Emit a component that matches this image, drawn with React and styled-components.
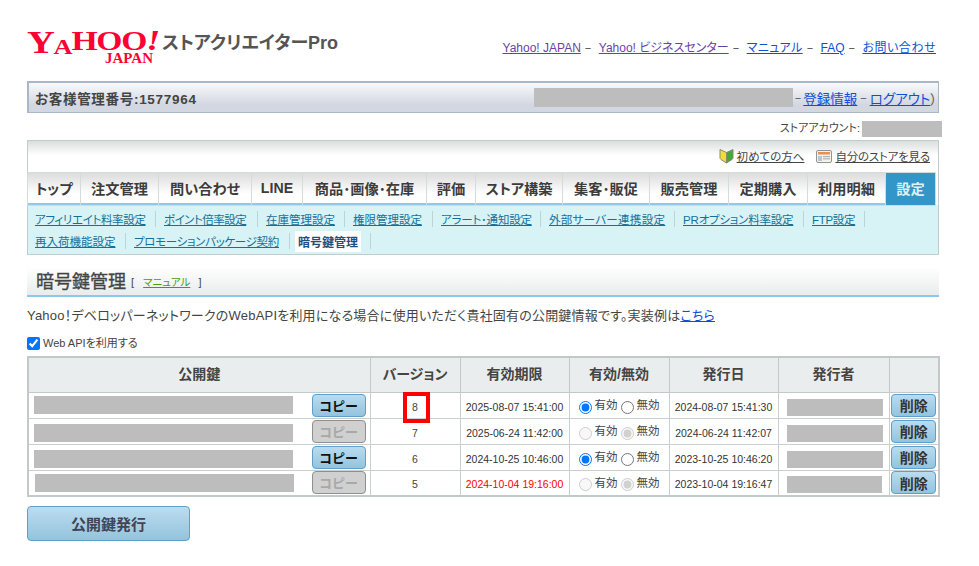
import React from "react";
import styled, { createGlobalStyle } from "styled-components";

const GlobalStyle = createGlobalStyle`
  html, body {
    margin: 0;
    padding: 0;
    background: #fff;
    color: #333;
    font-family: "Liberation Sans", "Noto Sans CJK JP", sans-serif;
    font-feature-settings: "palt";
  }
  a { cursor: pointer; }
`;

const topLinks = [
  { label: "Yahoo! JAPAN", visited: true },
  { label: "Yahoo! ビジネスセンター", visited: true },
  { label: "マニュアル", track: 0.4 },
  { label: "FAQ" },
  { label: "お問い合わせ", track: 0.5 },
];

const tabs = [
  ["トップ", 52],
  ["注文管理", 77],
  ["問い合わせ", 92],
  ["LINE", 50],
  ["商品･画像･在庫", 123],
  ["評価", 48],
  ["ストア構築", 86],
  ["集客･販促", 86],
  ["販売管理", 78],
  ["定期購入", 78],
  ["利用明細", 77],
  ["設定", 49],
];

const subLinks = [
  ["アフィリエイト料率設定", 121, -0.35],
  ["ポイント倍率設定", 94, -0.5],
  ["在庫管理設定", 79, 0],
  ["権限管理設定", 80, 0],
  ["アラート･通知設定", 100, -0.2],
  ["外部サーバー連携設定", 126, 0.3],
  ["PRオプション料率設定", 121, -0.2],
  ["FTP設定", 53, -0.3],
];

const subLinksSecond = [
  ["再入荷機能設定", 91, 0],
  ["プロモーションパッケージ契約", 156, -0.3],
];

const rows = [
  { version: 8, expires: "2025-08-07 15:41:00", issued: "2024-08-07 15:41:30", active: true, marked: true },
  { version: 7, expires: "2025-06-24 11:42:00", issued: "2024-06-24 11:42:07", active: false, keyDrop: 4 },
  { version: 6, expires: "2024-10-25 10:46:00", issued: "2023-10-25 10:46:20", active: true, keyDrop: 4 },
  { version: 5, expires: "2024-10-04 19:16:00", issued: "2023-10-04 19:16:47", active: false, late: true, shifted: true },
];

const BeginnerIcon = () => (
  <svg width="15" height="16" viewBox="0 0 15 16">
    <path d="M1 1.5 7.5 4.5V15L2 11.5C1.2 11 1 10.4 1 9.5Z" fill="#f2dc3c" stroke="#8a8a70" strokeWidth="1" />
    <path d="M14 1.5 7.5 4.5V15L13 11.5C13.8 11 14 10.4 14 9.5Z" fill="#45a83a" stroke="#8a8a70" strokeWidth="1" />
  </svg>
);

const StoreIcon = () => (
  <svg width="16" height="13" viewBox="0 0 16 13">
    <rect x="0.5" y="0.5" width="15" height="12" rx="1.5" fill="#f6f2e8" stroke="#8d959c" />
    <rect x="2" y="2" width="12" height="2.5" fill="#e58f5a" />
    <rect x="2" y="6" width="4" height="5" fill="#b9c6d2" />
    <rect x="7" y="6" width="7" height="1.2" fill="#a9b4bd" />
    <rect x="7" y="8.2" width="7" height="1.2" fill="#a9b4bd" />
  </svg>
);

const App = () => (
  <Page>
    <GlobalStyle />
    <Header>
      <Brand>
        <Logo>
          <LogoWord>
            <LogoLetter $size={32} $drop={1}>Y</LogoLetter>
            <LogoLetter $size={22} $drop={6}>A</LogoLetter>
            <LogoLetter $size={28}>H</LogoLetter>
            <LogoLetter $size={28}>O</LogoLetter>
            <LogoLetter $size={28}>O</LogoLetter>
            <LogoBang>!</LogoBang>
          </LogoWord>
          <LogoJapan>JAPAN</LogoJapan>
        </Logo>
        <BrandName>ストアクリエイターPro</BrandName>
      </Brand>
      <TopLinks>
        {topLinks.map((link, i) => (
          <React.Fragment key={link.label}>
            <TopLink $visited={link.visited} $track={link.track}>
              {link.label}
            </TopLink>
            {i < topLinks.length - 1 && <TopDash>−</TopDash>}
          </React.Fragment>
        ))}
      </TopLinks>
    </Header>

    <AccountBar>
      <AccountNo>お客様管理番号:1577964</AccountNo>
      <AccountRight>
        <Redacted $w={259} $h={19} />
        <Dash $gap={2}>−</Dash>
        <BarLink>登録情報</BarLink>
        <Dash $gap={3}>−</Dash>
        <BarLink>ログアウト</BarLink>
        <span>）</span>
      </AccountRight>
    </AccountBar>

    <StoreAccount>
      <StoreAccountLabel>ストアアカウント:</StoreAccountLabel>
      <Redacted $w={80} $h={16} />
    </StoreAccount>

    <NavPanel>
      <HelpBar>
        <HelpLink>
          <BeginnerIcon />
          <span>初めての方へ</span>
        </HelpLink>
        <HelpLink $track={-0.2}>
          <StoreIcon />
          <span>自分のストアを見る</span>
        </HelpLink>
      </HelpBar>
      <Tabs>
        {tabs.map(([label, width]) => (
          <Tab key={label} $w={width} $active={label === "設定"}>
            {label}
          </Tab>
        ))}
      </Tabs>
      <SubNav>
        <SubRow>
          {subLinks.map(([label, width, track]) => (
            <SubItem key={label} $w={width}>
              <SubLink $track={track}>{label}</SubLink>
            </SubItem>
          ))}
        </SubRow>
        <SubRow>
          {subLinksSecond.map(([label, width, track]) => (
            <SubItem key={label} $w={width}>
              <SubLink $track={track}>{label}</SubLink>
            </SubItem>
          ))}
          <SubItem $w={73}>
            <SubActive>暗号鍵管理</SubActive>
          </SubItem>
        </SubRow>
      </SubNav>
    </NavPanel>

    <Heading>
      <HeadingTitle>暗号鍵管理</HeadingTitle>
      <HeadingNote>
        [ <ManualLink>マニュアル</ManualLink> ]
      </HeadingNote>
    </Heading>

    <Description>
      Yahoo！デベロッパーネットワークのWebAPIを利用になる場合に使用いただく貴社固有の公開鍵情報です。実装例は
      <BarLink>こちら</BarLink>
    </Description>

    <CheckLine>
      <input type="checkbox" defaultChecked />
      <span>Web APIを利用する</span>
    </CheckLine>

    <KeyTable>
      <colgroup>
        <col style={{ width: 342 }} />
        <col style={{ width: 90 }} />
        <col style={{ width: 109 }} />
        <col style={{ width: 100 }} />
        <col style={{ width: 109 }} />
        <col style={{ width: 111 }} />
        <col style={{ width: 50 }} />
      </colgroup>
      <thead>
        <HeadRow>
          <Th>公開鍵</Th>
          <Th>バージョン</Th>
          <Th>有効期限</Th>
          <Th>有効/無効</Th>
          <Th>発行日</Th>
          <Th>発行者</Th>
          <Th />
        </HeadRow>
      </thead>
      <tbody>
        {rows.map((row) => (
          <Row key={row.version}>
            <Td>
              <KeyCell>
                <Redacted $w={259} $h={18} $shift={row.shifted ? 1 : 0} $drop={row.keyDrop} />
                <CopyButton disabled={!row.active}>コピー</CopyButton>
              </KeyCell>
            </Td>
            <VersionCell>
              {row.version}
              {row.marked && <Marker />}
            </VersionCell>
            <DateCell $late={row.late}>{row.expires}</DateCell>
            <Td>
              <RadioGroup>
                <RadioLabel>
                  <input type="radio" name={`v${row.version}`} defaultChecked={row.active} disabled={!row.active} />
                  <span>有効</span>
                </RadioLabel>
                <RadioLabel>
                  <input type="radio" name={`v${row.version}`} defaultChecked={!row.active} disabled={!row.active} />
                  <span>無効</span>
                </RadioLabel>
              </RadioGroup>
            </Td>
            <DateCell>{row.issued}</DateCell>
            <Td>
              <IssuerCell>
                <Redacted $w={row.shifted ? 95 : 96} $h={17} />
              </IssuerCell>
            </Td>
            <Td>
              <DeleteCell>
                <DeleteButton>削除</DeleteButton>
              </DeleteCell>
            </Td>
          </Row>
        ))}
      </tbody>
    </KeyTable>

    <IssueButton>公開鍵発行</IssueButton>
  </Page>
);

export default App;

const Page = styled.div`
  width: 912px;
  height: 566px;
  margin-left: 27px;
  box-sizing: border-box;
  padding-top: 30px;
`;

const Header = styled.header`
  display: flex;
  justify-content: space-between;
  height: 51px;
`;

const Brand = styled.div`
  display: flex;
  align-items: flex-start;
  gap: 5px;
`;

const Logo = styled.div`
  width: 130px;
  display: flex;
  flex-direction: column;
  color: #ff0033;
  font-family: "Liberation Serif", serif;
  font-weight: 700;
`;

const LogoWord = styled.div`
  display: flex;
  align-items: flex-start;
  height: 22px;
  line-height: 22px;
  white-space: nowrap;
  letter-spacing: -1px;
  transform: scaleX(1.2);
  transform-origin: left top;
`;

const LogoLetter = styled.span`
  font-size: ${(p) => p.$size}px;
  margin-top: ${(p) => p.$drop || 0}px;
`;

const LogoBang = styled.span`
  font-size: 30px;
  font-style: italic;
  margin-top: -1px;
`;

const LogoJapan = styled.div`
  align-self: flex-end;
  margin-right: 4px;
  font-size: 15px;
  line-height: 12px;
`;

const BrandName = styled.div`
  margin-top: 1px;
  font-size: 18px;
  line-height: 24px;
  font-weight: 700;
  color: #555;
`;

const TopLinks = styled.nav`
  display: flex;
  align-items: baseline;
  margin-top: 10px;
  margin-right: 3px;
  font-size: 12px;
  line-height: 16px;
`;

const TopLink = styled.a`
  color: ${(p) => (p.$visited ? "#6b3fa8" : "#0f4fd8")};
  text-decoration: underline;
  letter-spacing: ${(p) => p.$track || 0}px;
`;

const TopDash = styled.span`
  margin: 0 7.5px 0 4px;
  color: #444;
  font-size: 11px;
`;

const AccountBar = styled.div`
  display: flex;
  align-items: center;
  justify-content: space-between;
  box-sizing: border-box;
  height: 32px;
  padding: 0 1px 0 6px;
  border: 1px solid #a9b7c8;
  border-top-width: 2px;
  border-left-width: 2px;
  background: linear-gradient(#f8f9fa, #d2d7e1 75%);
`;

const AccountNo = styled.div`
  font-size: 13.5px;
  letter-spacing: 0.7px;
  font-weight: 700;
  color: #444;
`;

const AccountRight = styled.div`
  display: flex;
  align-items: center;
  font-size: 13.5px;
  color: #555;
`;

const Redacted = styled.div`
  flex: none;
  width: ${(p) => p.$w}px;
  height: ${(p) => p.$h}px;
  margin-left: ${(p) => p.$shift || 0}px;
  margin-top: ${(p) => p.$drop || 0}px;
  background: #bdbdbd;
`;

const Dash = styled.span`
  margin: 0 ${(p) => p.$gap}px;
  font-size: 11px;
`;

const BarLink = styled.a`
  color: #0f4fd8;
  text-decoration: underline;
`;

const StoreAccount = styled.div`
  display: flex;
  align-items: center;
  justify-content: flex-end;
  gap: 2px;
  height: 16px;
  margin: 8px -3px 3px 0;
  font-size: 11px;
  color: #444;
`;

const StoreAccountLabel = styled.span`
  margin-bottom: 4px;
`;

const NavPanel = styled.div`
  border: 1px solid #bfcdcf;
`;

const HelpBar = styled.div`
  display: flex;
  align-items: center;
  justify-content: flex-end;
  gap: 12px;
  height: 32px;
  padding: 0 8px 2px 0;
  box-sizing: border-box;
  background: linear-gradient(#d9dedd, #fff 45%);
`;

const HelpLink = styled.a`
  display: flex;
  align-items: center;
  gap: 3px;
  font-size: 11.5px;
  letter-spacing: ${(p) => p.$track || 0}px;
  color: #444;

  span {
    text-decoration: underline;
  }
`;

const Tabs = styled.div`
  display: flex;
  gap: 1px;
  height: 32px;
  background: #fff;
`;

const Tab = styled.div`
  flex: none;
  width: ${(p) => p.$w}px;
  box-sizing: border-box;
  display: flex;
  align-items: center;
  justify-content: center;
  font-size: 14.2px;
  font-weight: 700;
  color: ${(p) => (p.$active ? "#dff1f8" : "#3c3c3c")};
  background: ${(p) => (p.$active ? "#3297c8" : "linear-gradient(#dcdcdc, #fff 70%)")};
  border-bottom: 2px solid ${(p) => (p.$active ? "#3297c8" : "#8fcbe9")};
  outline: 1px solid #d5dada;
`;

const SubNav = styled.div`
  display: flex;
  flex-direction: column;
  gap: 1px;
  height: 49px;
  box-sizing: border-box;
  padding: 5px 0 0 7px;
  background: #d8f3f5;
`;

const SubRow = styled.div`
  display: flex;
  height: 20px;
  margin-top: 1px;
`;

const SubItem = styled.div`
  flex: none;
  width: ${(p) => p.$w}px;
  box-sizing: border-box;
  margin-right: 8px;
  display: flex;
  align-items: center;
  border-right: 1px solid #bcd4d6;
  height: 16px;
  font-size: 11.5px;
  white-space: nowrap;
`;

const SubLink = styled.a`
  color: #14709a;
  text-decoration: underline;
  letter-spacing: ${(p) => p.$track || 0}px;
`;

const SubActive = styled.span`
  margin-left: -3px;
  padding: 2px 3px;
  background: #fff;
  font-size: 12px;
  color: #1f4e7a;
  font-weight: 700;
`;

const Heading = styled.div`
  display: flex;
  align-items: center;
  gap: 5px;
  box-sizing: border-box;
  height: 30px;
  margin-top: 12px;
  padding: 0 0 2px 9px;
  border-bottom: 2px solid #8cc8ee;
  background: linear-gradient(#fff, #e9eceb);
`;

const HeadingTitle = styled.h1`
  margin: 0;
  font-size: 18px;
  font-weight: 400;
  -webkit-text-stroke: 0.3px #444;
  color: #444;
`;

const HeadingNote = styled.span`
  margin-top: 2px;
  font-size: 11px;
  color: #444;
`;

const ManualLink = styled.a`
  margin: 0 5px 0 6px;
  font-size: 10.5px;
  color: #4a9a10;
  text-decoration: underline;
`;

const Description = styled.p`
  margin: 9px 0 0;
  font-size: 13px;
  letter-spacing: 0.2px;
  line-height: 19px;
  color: #444;
`;

const CheckLine = styled.label`
  display: flex;
  align-items: center;
  gap: 3px;
  height: 16px;
  margin-top: 10px;
  font-size: 11px;
  color: #444;

  input {
    margin: 0;
    width: 13px;
    height: 13px;
  }

  span {
    margin-bottom: 2px;
  }
`;

const KeyTable = styled.table`
  width: 912px;
  margin-top: 5px;
  table-layout: fixed;
  border-collapse: collapse;
  border: 2px solid #c3c9ca;
`;

const HeadRow = styled.tr`
  height: 35px;
`;

const Row = styled.tr`
  height: 26px;
`;

const Th = styled.th`
  padding: 0 0 4px;
  font-size: 14px;
  font-weight: 700;
  color: #444;
  background: #eaeded;
  border: 1px solid #c3c9ca;
`;

const Td = styled.td`
  padding: 0;
  border: 1px solid #c9cfd0;
  font-size: 11.5px;
  color: #444;
`;

const KeyCell = styled.div`
  display: flex;
  align-items: center;
  justify-content: space-between;
  padding: 0 4px 0 5px;
`;

const VersionCell = styled(Td)`
  position: relative;
  padding-top: 3px;
  text-align: center;
  font-size: 10.5px;
  line-height: 14px;
`;

const Marker = styled.div`
  position: absolute;
  left: 32px;
  top: -1px;
  width: 27px;
  height: 31px;
  box-sizing: border-box;
  border: 4px solid #ff0000;
`;

const DateCell = styled(Td)`
  padding-top: 3px;
  text-align: center;
  font-size: 10.5px;
  line-height: 14px;
  white-space: nowrap;
  color: ${(p) => (p.$late ? "#ff0000" : "#333")};
`;

const RadioGroup = styled.div`
  display: flex;
  align-items: center;
  justify-content: center;
  gap: 3px;
  padding-top: 4px;
`;

const RadioLabel = styled.label`
  display: flex;
  align-items: center;
  gap: 3px;
  font-size: 11.5px;
  line-height: 14px;

  input {
    margin: 0;
    width: 13px;
    height: 13px;
  }

  span {
    margin-bottom: 4px;
  }
`;

const IssuerCell = styled.div`
  display: flex;
  padding: 4px 0 0 8px;
`;

const DeleteCell = styled.div`
  display: flex;
  justify-content: center;
`;

const CopyButton = styled.button`
  width: 54px;
  height: 23px;
  padding: 0;
  font-family: inherit;
  font-size: 13px;
  font-weight: 700;
  border-radius: 4px;
  border: 1px solid #5f9fcb;
  color: #111;
  background: linear-gradient(#b9dcf0, #93c4dd);

  &:disabled {
    border: 1px solid #8f8f8f;
    color: #a8a8a8;
    background: #d0d0d0;
  }
`;

const DeleteButton = styled(CopyButton)`
  width: 45px;
  font-size: 14px;
  color: #333;
`;

const IssueButton = styled.button`
  display: block;
  width: 163px;
  height: 35px;
  margin-top: 9px;
  padding: 0;
  font-family: inherit;
  font-size: 15px;
  font-weight: 700;
  color: #445;
  border-radius: 4px;
  border: 1px solid #5f9fcb;
  background: linear-gradient(#bcdcf0, #93c4dd);
`;
